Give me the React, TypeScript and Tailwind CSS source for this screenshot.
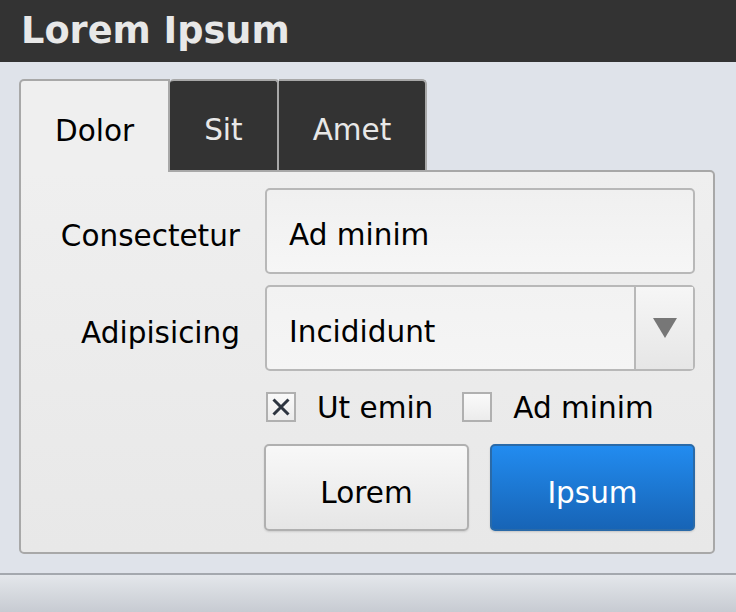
const font = { fontFamily: '"DejaVu Sans", Verdana, sans-serif' };

function Tab({ label, active, first, last }: { label: string; active?: boolean; first?: boolean; last?: boolean }) {
  return (
    <div
      className={[
        "flex items-center justify-center border-t-2 border-r-2 border-[#a8a8a8] px-[34px] pt-[9px] text-[29.5px]",
        first ? "border-l-2 rounded-tl-[5px]" : "",
        last ? "rounded-tr-[5px]" : "",
        !first && !last ? "rounded-t-[4px]" : "",
        active
          ? "relative z-10 -mb-[2px] h-[93px] bg-[#efefef] text-black"
          : "h-[91px] bg-[#333333] text-[#e8e8e8]",
      ].join(" ")}
    >
      {label}
    </div>
  );
}

function Checkbox({ checked, label }: { checked?: boolean; label: string }) {
  return (
    <label className="flex items-center gap-[21px]">
      <span className="flex h-[30px] w-[30px] items-center justify-center border-2 border-[#b0b0b0] bg-gradient-to-b from-[#fafafa] to-[#ececec]">
        {checked && (
          <svg width="18" height="18" viewBox="0 0 18 18">
            <path d="M1.5 1.5 L16.5 16.5 M16.5 1.5 L1.5 16.5" stroke="#2d3540" strokeWidth="3" strokeLinecap="butt" />
          </svg>
        )}
      </span>
      <span className="pt-[2px] text-[29.5px] text-black">{label}</span>
    </label>
  );
}

export default function App() {
  return (
    <div className="flex h-[612px] w-[736px] flex-col bg-[#dfe3ea]" style={font}>
      <div className="flex h-[62px] items-center bg-[#333333] px-[21px]">
        <span className="text-[36.7px] font-bold leading-none text-[#e8e8e8]">Lorem Ipsum</span>
      </div>

      <div className="flex-1 pl-[19px] pt-[17px]">
        <div className="flex items-end">
          <Tab label="Dolor" active first />
          <Tab label="Sit" />
          <Tab label="Amet" last />
        </div>
        <div className="w-[696px] rounded-b-[5px] rounded-tr-[5px] border-2 border-[#a8a8a8] bg-gradient-to-b from-[#efefef] to-[#e8e8e8] pb-[21px] pr-[18px] pt-[16px]">
          <div className="grid grid-cols-[219px_430px] gap-x-[25px]">
            <div className="flex h-[86px] items-center justify-end pt-[10px] text-[29.5px] text-black">Consectetur</div>
            <div className="flex h-[86px] items-center rounded-[5px] border-2 border-[#b8b8b8] bg-gradient-to-b from-[#f0f0f0] to-[#f6f6f6] pl-[22px] pt-[9px] text-[29.5px] text-black">
              Ad minim
            </div>

            <div className="mt-[11px] flex h-[86px] items-center justify-end pt-[10px] text-[29.5px] text-black">Adipisicing</div>
            <div className="mt-[11px] flex h-[86px] rounded-[5px] border-2 border-[#b8b8b8] bg-gradient-to-b from-[#f2f2f2] to-[#f5f5f5]">
              <div className="flex flex-1 items-center pl-[22px] pt-[9px] text-[29.5px] text-black">Incididunt</div>
              <div className="flex w-[59px] items-center justify-center border-l-2 border-[#b8b8b8] bg-gradient-to-b from-[#f6f6f6] to-[#e6e6e6]">
                <svg width="24" height="20" viewBox="0 0 24 20">
                  <path d="M0 0 H24 L12 20 Z" fill="#777777" />
                </svg>
              </div>
            </div>

            <div />
            <div className="mt-[21px] flex h-[30px] items-center gap-[29px] pl-[1px]">
              <Checkbox checked label="Ut emin" />
              <Checkbox label="Ad minim" />
            </div>

            <div />
            <div className="mt-[22px] flex gap-[21px] -ml-[1px]">
              <button className="h-[87px] w-[206px] rounded-[5px] border-2 border-[#b0b0b0] bg-gradient-to-b from-[#f8f8f8] to-[#e6e6e6] pt-[12px] text-[29.5px] text-black shadow-[0_1px_2px_rgba(0,0,0,0.12)]">
                Lorem
              </button>
              <button className="h-[87px] w-[206px] rounded-[5px] border-2 border-[#2a6aa8] bg-gradient-to-b from-[#228cf0] to-[#1764b6] pt-[12px] text-[29.5px] text-white shadow-[0_1px_2px_rgba(0,0,0,0.15)]">
                Ipsum
              </button>
            </div>
          </div>
        </div>
      </div>

      <div className="h-[39px] border-t-2 border-[#a4a8ae] bg-gradient-to-b from-[#e4e7eb] to-[#c7cbd2]" />
    </div>
  );
}
